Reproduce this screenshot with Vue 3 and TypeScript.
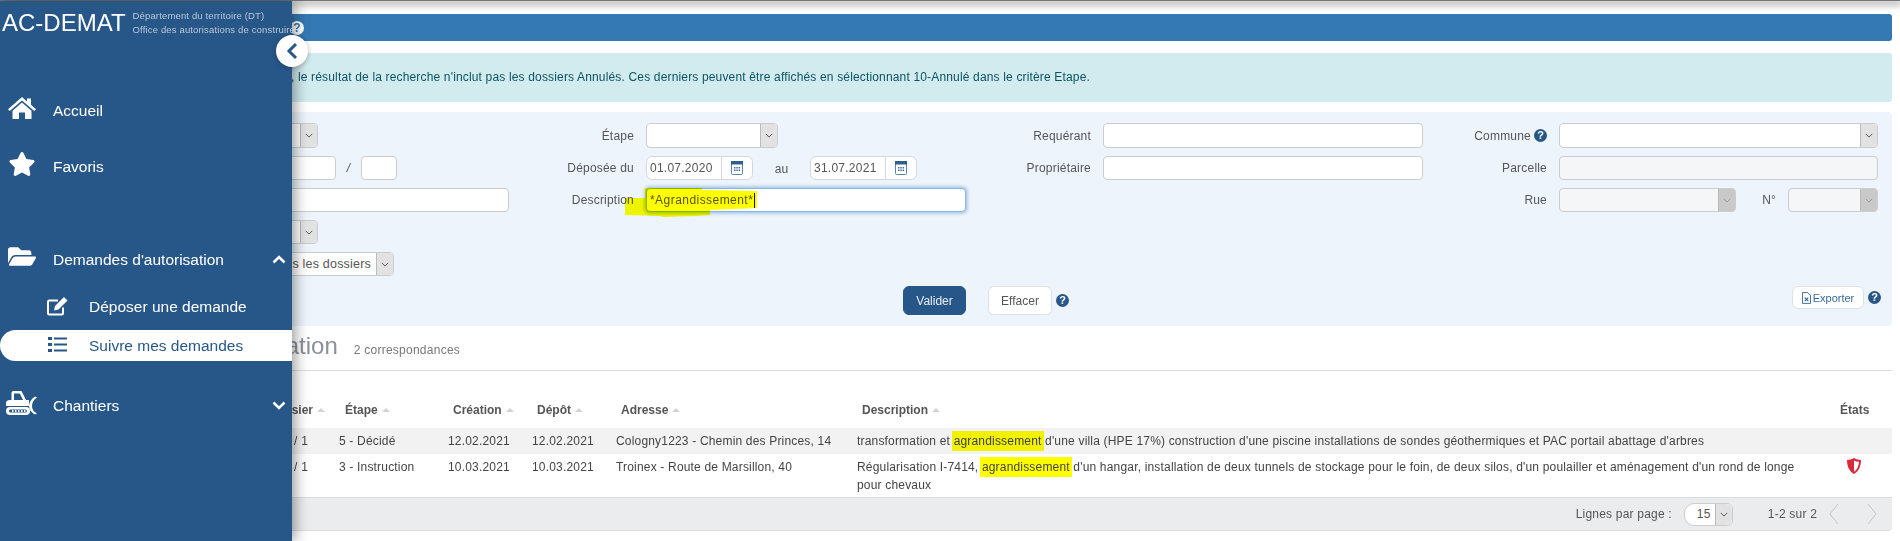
<script setup lang="ts">
const rows = [
  { dossier: 'A/329015-1 / 1', etape: '5 - Décidé', creation: '12.02.2021', depot: '12.02.2021', adresse: 'Cologny1223 - Chemin des Princes, 14', before: 'transformation et ', after: " d'une villa (HPE 17%) construction d'une piscine installations de sondes géothermiques et PAC portail abattage d'arbres", alert: false },
  { dossier: 'APA/331844-4 / 1', etape: '3 - Instruction', creation: '10.03.2021', depot: '10.03.2021', adresse: 'Troinex - Route de Marsillon, 40', before: 'Régularisation I-7414, ', after: " d'un hangar, installation de deux tunnels de stockage pour le foin, de deux silos, d'un poulailler et aménagement d'un rond de longe pour chevaux", alert: true },
]
const headers = ['Dossier', 'Étape', 'Création', 'Dépôt', 'Adresse', 'Description']
</script>

<template>
  <div class="page">
    <div class="topline"></div>
    <main class="main">
      <div class="bluebar"><span class="bar-help">?</span></div>
      <div class="alert">Par défaut, le résultat de la recherche n'inclut pas les dossiers Annulés. Ces derniers peuvent être affichés en sélectionnant 10-Annulé dans le critère Etape.</div>

      <section class="panel">
        <div class="form">
          <label class="lab">Type</label>
          <div class="field"><div class="ctl sel w-auto"><i class="arrow"><svg viewBox="0 0 10 6"><path d="M1 1l4 4 4-4" /></svg></i></div></div>
          <label class="lab">Étape</label>
          <div class="field"><div class="ctl sel w-132"><i class="arrow"><svg viewBox="0 0 10 6"><path d="M1 1l4 4 4-4" /></svg></i></div></div>
          <label class="lab">Requérant</label>
          <div class="ctl"></div>
          <label class="lab">Commune <span class="help">?</span></label>
          <div class="ctl sel"><i class="arrow"><svg viewBox="0 0 10 6"><path d="M1 1l4 4 4-4" /></svg></i></div>

          <label class="lab">N° dossier</label>
          <div class="field num">
            <div class="ctl n1"></div><span class="slash">/</span><div class="ctl n2"></div>
          </div>
          <label class="lab">Déposée du</label>
          <div class="field dates">
            <div class="date"><span class="date-val">01.07.2020</span><i class="addon"><svg viewBox="0 0 12 14"><rect x=".5" y=".5" width="11" height="13" rx="1" fill="#fff" stroke="#5b83ad" /><rect x="0" y="0" width="12" height="3.5" fill="#2f5f90" /><path d="M3 6h1.500v1.500H3zM5.300 6h1.500v1.500H5.300zM7.600 6h1.500v1.500H7.600zM3 8.500h1.500V10H3zM5.300 8.500h1.500V10H5.300zM7.600 8.500h1.500V10H7.600z" fill="#3d6c9c" /></svg></i></div>
            <span class="au">au</span>
            <div class="date"><span class="date-val">31.07.2021</span><i class="addon"><svg viewBox="0 0 12 14"><rect x=".5" y=".5" width="11" height="13" rx="1" fill="#fff" stroke="#5b83ad" /><rect x="0" y="0" width="12" height="3.5" fill="#2f5f90" /><path d="M3 6h1.500v1.500H3zM5.300 6h1.500v1.500H5.300zM7.600 6h1.500v1.500H7.600zM3 8.500h1.500V10H3zM5.300 8.500h1.500V10H5.300zM7.600 8.500h1.500V10H7.600z" fill="#3d6c9c" /></svg></i></div>
          </div>
          <label class="lab">Propriétaire</label>
          <div class="ctl"></div>
          <label class="lab">Parcelle</label>
          <div class="ctl off"></div>

          <label class="lab">Adresse</label>
          <div class="ctl"></div>
          <label class="lab">Description</label>
          <div class="field descr">
            <div class="ctl focus">*Agrandissement*<span class="caret"></span></div>
            <svg class="marker" viewBox="0 0 132 30" width="132" height="30"><path d="M20 0H77V2L132 3V20L85 22V27L70 28L38 29L36 28L0 27V10L20 10Z" /></svg>
          </div>
          <span></span><span></span>
          <label class="lab">Rue</label>
          <div class="field rue">
            <div class="ctl sel off street"><i class="arrow"><svg viewBox="0 0 10 6"><path d="M1 1l4 4 4-4" /></svg></i></div>
            <span class="no">N°</span>
            <div class="ctl sel off nbr"><i class="arrow"><svg viewBox="0 0 10 6"><path d="M1 1l4 4 4-4" /></svg></i></div>
          </div>

          <label class="lab">Statut</label>
          <div class="field"><div class="ctl sel w-auto"><i class="arrow"><svg viewBox="0 0 10 6"><path d="M1 1l4 4 4-4" /></svg></i></div></div>
          <span class="wide"></span>

          <label class="lab">Afficher</label>
          <div class="field"><div class="ctl sel all">Tous les dossiers<i class="arrow"><svg viewBox="0 0 10 6"><path d="M1 1l4 4 4-4" /></svg></i></div></div>
          <span class="wide"></span>
        </div>

        <div class="actions">
          <button class="btn primary">Valider</button>
          <button class="btn plain">Effacer</button>
          <span class="help">?</span>
          <div class="export">
            <button class="btn small">
              <svg class="xls" viewBox="0 0 10 13"><path d="M.5.500h6l3 3v9h-9z" fill="#fff" stroke="#2f5f90" /><path d="M3 6l4 4M7 6l-4 4" stroke="#2f5f90" stroke-width="1.200" /></svg>Exporter
            </button>
            <span class="help">?</span>
          </div>
        </div>
      </section>

      <div class="result-head">
        <h2>Demandes d'autorisation</h2>
        <small>2 correspondances</small>
      </div>

      <section class="results">
        <table>
          <colgroup>
            <col class="c1" /><col class="c2" /><col class="c3" /><col class="c4" /><col class="c5" /><col class="c6" /><col />
          </colgroup>
          <thead>
            <tr>
              <th v-for="h in headers" :key="h" :class="{ first: h === 'Dossier' }">{{ h }}<i class="sort"></i></th>
              <th class="etats">États</th>
            </tr>
          </thead>
          <tbody>
            <tr v-for="r in rows" :key="r.dossier">
              <td class="first">{{ r.dossier }}</td>
              <td>{{ r.etape }}</td>
              <td>{{ r.creation }}</td>
              <td>{{ r.depot }}</td>
              <td>{{ r.adresse }}</td>
              <td class="desc">{{ r.before }}<mark>agrandissement</mark>{{ r.after }}</td>
              <td class="state">
                <svg v-if="r.alert" viewBox="0 0 14 16" width="14" height="16"><path d="M7 0C9 1.300 11.500 2 14 2C14 8 12 13 7 16C2 13 0 8 0 2C2.500 2 5 1.300 7 0Z" fill="#dc2a3c" /><path d="M7 2.400C8.500 3.100 10.200 3.600 12 3.800C11.700 8.200 10.300 11.600 7 13.800Z" fill="#fff" /></svg>
              </td>
            </tr>
          </tbody>
        </table>
        <footer class="pager">
          <span>Lignes par page :</span>
          <div class="ctl sel pages">15<i class="arrow"><svg viewBox="0 0 10 6"><path d="M1 1l4 4 4-4" /></svg></i></div>
          <span class="count">1-2 sur 2</span>
          <svg class="pg" viewBox="0 0 10 22"><path d="M9 1L1 11l8 10" /></svg>
          <svg class="pg" viewBox="0 0 10 22"><path d="M1 1l8 10L1 21" /></svg>
        </footer>
      </section>
    </main>

    <aside class="side">
      <header class="brand">
        <span class="logo">AC-DEMAT</span>
        <span class="org"><span>Département du territoire (DT)</span><span>Office des autorisations de construire</span></span>
      </header>
      <button class="collapse"><svg viewBox="0 0 12 18" width="12" height="18"><path d="M10 2L3 9l7 7" /></svg></button>

      <nav class="nav">
        <a class="item i-home">
          <svg class="ico" viewBox="0 0 28 22" width="28" height="22"><path d="M14 0L0 12.200l1.700 1.900L14 3.500l12.300 10.600 1.700-1.900-5-4.400V1.500h-4v3z" /><path d="M14 5.500L4.500 13.700V22H11v-6.500h6V22h6.500v-8.300z" /></svg>
          <span>Accueil</span>
        </a>
        <a class="item i-fav">
          <svg class="ico" viewBox="0 0 576 512" width="27" height="24"><path d="M259.300 17.800L194 150.200 47.900 171.500c-26.200 3.800-36.700 36.100-17.700 54.600l105.700 103-25 145.500c-4.500 26.300 23.200 46 46.400 33.700L288 439.600l130.700 68.700c23.200 12.200 50.900-7.400 46.400-33.700l-25-145.500 105.700-103c19-18.500 8.500-50.800-17.700-54.600L382 150.200 316.700 17.800c-11.700-23.600-45.600-23.900-57.400 0z" /></svg>
          <span>Favoris</span>
        </a>
        <a class="item i-dem">
          <svg class="ico" viewBox="0 0 576 512" width="28" height="25"><path d="M572.694 292.093L500.270 416.248A63.997 63.997 0 0 1 444.989 448H45.025c-18.523 0-30.064-20.093-20.731-36.093l72.424-124.155A64 64 0 0 1 152 256h399.964c18.523 0 30.064 20.093 20.730 36.093zM152 224h328v-48c0-26.510-21.490-48-48-48H272l-64-64H48C21.490 64 0 85.490 0 112v278.046l69.077-118.418C86.214 242.250 117.989 224 152 224z" /></svg>
          <span>Demandes d'autorisation</span>
          <svg class="chev" viewBox="0 0 14 9" width="14" height="9"><path d="M1.500 7.500L7 2l5.500 5.500" /></svg>
        </a>
        <a class="sub i-dep">
          <svg class="ico" viewBox="0 0 21 19" width="21" height="19"><path d="M16 10.500V16a1.500 1.500 0 0 1-1.500 1.500H2.500A1.500 1.500 0 0 1 1 16V5a1.500 1.500 0 0 1 1.500-1.500H11" fill="none" stroke="currentColor" stroke-width="2" /><path d="M17 0l3.500 3.500-9 9-4.500 1 1-4.500z" /></svg>
          <span>Déposer une demande</span>
        </a>
        <a class="sub active">
          <svg class="ico" viewBox="0 0 19 15" width="19" height="15"><path d="M0 0h4v3H0zM0 6h4v3H0zM0 12h4v3H0zM6 .5h13v2H6zM6 6.500h13v2H6zM6 12.500h13v2H6z" /></svg>
          <span>Suivre mes demandes</span>
        </a>
        <a class="item i-cha">
          <svg class="ico" viewBox="0 0 31 24" width="31" height="24"><path d="M7 0H15.500L20 9H23V15H0V12C0 10 1.500 9 4 9H5.500V2A2 2 0 0 1 7 0ZM8 2.500V9H17L13.800 2.500Z" fill-rule="evenodd" /><path d="M4 16H20A4 4 0 0 1 20 24H4A4 4 0 0 1 4 16ZM4.500 18.500A1.500 1.500 0 0 0 4.500 21.500H19.500A1.500 1.500 0 0 0 19.500 18.500Z" fill-rule="evenodd" /><path d="M6 19h1.500v2H6zM9 19h1.500v2H9zM12 19h1.500v2H12zM15 19h1.500v2H15zM18 19h1.500v2H18z" /><path d="M31 6.500C27.500 8.500 26 12 26 15S27.500 20.500 31 22.500L29 23.500C25 21.500 23 18 23 15S25 8 29 5.500Z" /></svg>
          <span>Chantiers</span>
          <svg class="chev" viewBox="0 0 14 9" width="14" height="9"><path d="M1.500 1.500L7 7l5.500-5.500" /></svg>
        </a>
      </nav>
    </aside>
  </div>
</template>

<style>
html, body { margin: 0; overflow: hidden; background: #fff; }
</style>

<style scoped>
* { box-sizing: border-box; }
.page { position: relative; width: 1900px; height: 541px; overflow: hidden; font-family: "Liberation Sans", Arial, sans-serif; font-size: 12px; color: #444; letter-spacing: .2px; }
.topline { height: 1px; background: #777; box-shadow: 0 2px 7px 2px rgba(0,0,0,.35); }

.main { display: flex; flex-direction: column; padding: 13px 8px 0 10px; }
.bluebar { height: 27px; background: #3478b4; border-radius: 3px; display: flex; align-items: center; padding-left: 280px; }
.bar-help { width: 14px; height: 14px; border-radius: 50%; background: #fff; color: #3478b4; font-weight: 700; font-size: 12px; line-height: 14px; text-align: center; letter-spacing: 0; }
.alert { margin-top: 12px; height: 49px; background: #d1ebef; color: #0c5460; padding: 16px 0 0 224px; font-size: 12px; line-height: 16px; border-radius: 3px; letter-spacing: .16px; }

.panel { margin-top: 10px; height: 214px; background: #edf4fb; border-radius: 4px; padding: 11px 13px 0 0; }
.form { display: grid; grid-template-columns: 108px 379px 113px 320px 113px 320px 112px 319px; grid-template-rows: 25px 24px 24px 24px 24px; column-gap: 12px; row-gap: 8px; }
.wide { grid-column: 3 / -1; }
.lab { display: flex; align-items: center; justify-content: flex-end; gap: 3px; color: #555; font-size: 12px; white-space: nowrap; }
.field { display: flex; align-items: stretch; min-width: 0; position: relative; }
.ctl { position: relative; display: flex; align-items: center; background: #fff; border: 1px solid #ccc; border-radius: 4px; padding-left: 4px; color: #555; font-size: 12px; }
.ctl.off { background: #f5f6f8; }
.sel { padding-right: 17px; }
.arrow { position: absolute; top: 0; right: 0; bottom: 0; width: 17px; background: #e2e2e2; border-left: 1px solid #bbb; border-radius: 0 3px 3px 0; display: flex; align-items: center; justify-content: center; }
.arrow svg { width: 8px; height: 5px; fill: none; stroke: #555; stroke-width: 1.200; }
.off .arrow { background: #c9c9c9; }
.off .arrow svg { stroke: #999; }
.w-auto { width: 188px; }
.w-132 { width: 132px; }
.num { align-items: stretch; }
.n1 { width: 206px; }
.slash { width: 25px; text-align: center; align-self: center; color: #555; font-style: italic; }
.n2 { width: 36px; }
.dates { align-items: stretch; }
.date { width: 107px; display: flex; background: #fff; border: 1px solid #d5d9de; border-radius: 6px; color: #555; }
.date-val { width: 74px; padding-left: 3px; align-self: center; letter-spacing: .25px; }
.addon { flex: 1; border-left: 1px solid #d5d9de; display: flex; align-items: center; justify-content: center; }
.addon svg { width: 12px; height: 14px; }
.au { width: 57px; text-align: center; align-self: center; padding-top: 1px; color: #555; }
.focus { width: 100%; border-color: #8ab4dc; box-shadow: 0 0 3px 2px rgba(120,170,220,.55); padding-left: 3px; white-space: nowrap; letter-spacing: .45px; }
.caret { display: inline-block; width: 1px; height: 15px; background: #111; margin-left: 1px; }
.marker { position: absolute; left: -21px; top: 0; mix-blend-mode: multiply; pointer-events: none; }
.marker path { fill: #ffff00; }
.rue { justify-content: space-between; align-items: stretch; }
.street { width: 177px; }
.no { width: 52px; text-align: right; padding-right: 12px; align-self: center; color: #555; }
.nbr { width: 90px; }
.all { width: 264px; justify-content: flex-end; padding-right: 22px; font-size: 12.500px; white-space: nowrap; }

.actions { display: flex; align-items: flex-start; padding-left: 893px; margin-top: 10px; }
.btn { font: inherit; cursor: default; border-radius: 6px; height: 29px; }
.primary { width: 63px; background: #275788; color: #e9eff5; border: 1px solid #275788; }
.plain { width: 64px; margin-left: 22px; margin-right: 4px; background: #fff; color: #555; border: 1px solid #dde2e7; }
.actions > .help { margin-top: 8px; }
.help { display: inline-block; flex: none; width: 13px; height: 13px; border-radius: 50%; background: #275788; color: #fff; font-weight: 700; font-size: 11px; line-height: 13px; text-align: center; letter-spacing: 0; }
.export { margin-left: auto; margin-right: -2px; display: flex; gap: 4px; align-items: flex-start; }
.export .help { margin-top: 5px; }
.small { width: 72px; height: 23px; padding: 0; background: #fff; color: #38689a; border: 1px solid #dde2e7; font-size: 11px; display: flex; align-items: center; justify-content: center; gap: 2px; }
.xls { width: 9px; height: 12px; }

.result-head { display: flex; align-items: baseline; height: 45px; padding: 6px 0 0 63px; border-bottom: 1px solid #ddd; }
.result-head h2 { margin: 0; font-weight: 400; font-size: 24px; line-height: 28px; color: #8b9198; letter-spacing: 0; }
.result-head small { margin-left: 16px; font-size: 12px; color: #777; letter-spacing: .25px; }

.results { margin-top: 0; }
table { width: 100%; table-layout: fixed; border-collapse: collapse; color: #444; }
.c1 { width: 324px; } .c2 { width: 109px; } .c3 { width: 84px; } .c4 { width: 84px; } .c5 { width: 241px; } .c6 { width: 980px; }
th { height: 57px; padding: 20px 0 0 10px; text-align: left; font-size: 12px; font-weight: 700; color: #555; white-space: nowrap; letter-spacing: 0; }
th:nth-child(2) { padding-left: 11px; }
th.first, td.first { text-align: right; }
th.first { padding-right: 9px; }
.sort { display: inline-block; margin-left: 4px; border: 4px solid transparent; border-top: 0; border-bottom: 4px solid #d4d4d4; vertical-align: 2px; }
.etats { padding-left: 8px; }
td { padding: 4px 5px; line-height: 18px; vertical-align: top; font-size: 12px; letter-spacing: .18px; }
td.first { padding-right: 26px; }
td.desc { padding-right: 30px; }
tbody tr:first-child { background: #f2f2f2; }
tbody tr:last-child td { padding-bottom: 3px; }
mark { background: #ffff00; color: inherit; padding: 3px 0; box-shadow: -2px 0 0 #ffff00, 2px 0 0 #ffff00; mix-blend-mode: multiply; }
.state { padding: 4px 0 0 15px; }
.state svg { display: block; }

.pager { height: 34px; background: #ebecee; border-top: 1px solid #ddd; border-bottom: 1px solid #ddd; border-radius: 0 0 4px 4px; display: flex; align-items: center; justify-content: flex-end; padding-right: 15px; color: #555; }
.pages { width: 49px; height: 23px; margin-left: 12px; border-radius: 10px 6px 6px 10px; padding-left: 12px; }
.pages .arrow { border-radius: 0 6px 6px 0; }
.count { margin-left: 35px; }
.pg { width: 10px; height: 22px; margin-left: 12px; fill: none; stroke: #c3c6ca; stroke-width: 1; }
.pg:last-child { margin-left: 28px; }

.side { position: absolute; left: 0; top: 1px; bottom: 0; width: 292px; background: #275788; color: #fff; box-shadow: 2px 0 14px rgba(0,0,0,.45); letter-spacing: 0; }
.brand { display: flex; gap: 7px; padding: 8px 0 0 2px; height: 50px; white-space: nowrap; }
.logo { font-size: 24px; line-height: 28px; }
.org { display: flex; flex-direction: column; font-size: 9.500px; line-height: 14px; color: #b9c8d8; letter-spacing: .15px; }
.collapse { position: absolute; top: 34px; left: 276px; width: 32px; height: 32px; padding: 0; border: 0; border-radius: 50%; background: #fff; box-shadow: 0 1px 5px rgba(0,0,0,.3); display: flex; align-items: center; justify-content: center; }
.collapse path { fill: none; stroke: #275788; stroke-width: 3; }

.nav { display: flex; flex-direction: column; padding-top: 44px; }
.item, .sub { display: flex; align-items: center; color: #fff; font-size: 15.500px; height: 31px; }
.item { padding-left: 8px; }
.item span { margin-left: 17px; }
.item .ico { width: 28px; fill: currentColor; margin-bottom: 6px; }
.sub { padding-left: 47px; }
.sub span { margin-left: 21px; }
.sub .ico { fill: currentColor; }
.active .ico { margin-left: 1px; margin-right: 1px; margin-bottom: 2px; }
.chev { position: absolute; left: 272px; fill: none; stroke: #fff; stroke-width: 2.500; }
.i-fav { margin-top: 25px; }
.i-dem { margin-top: 62px; }
.i-dep { margin-top: 16px; }
.active { margin-top: 8px; height: 31px; background: #fff; color: #275788; border-radius: 16px 0 0 16px; }
.i-cha { margin-top: 29px; }
.i-cha .ico { width: 31px; margin-left: -2px; }
.i-cha span { margin-left: 16px; }
</style>
